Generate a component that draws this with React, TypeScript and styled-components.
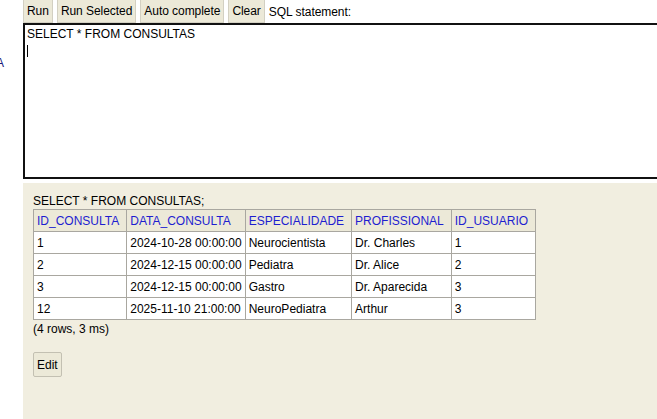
import React from "react";
import styled, { createGlobalStyle } from "styled-components";

const Global = createGlobalStyle`
  html, body { margin: 0; padding: 0; background: #ffffff; overflow: hidden; }
  body { font-family: "Liberation Sans", Arial, sans-serif; font-size: 12px; color: #000; }
`;

const Page = styled.div`
  display: flex;
  width: 657px;
  height: 419px;
  overflow: hidden;
`;

const LeftStrip = styled.div`
  width: 23px;
  flex: none;
  overflow: hidden;
  padding-top: 56px;
  box-sizing: border-box;
  font-size: 12px;
  color: #1a1a7a;
`;

const Clipped = styled.span`
  display: block;
  margin-left: -4px;
`;

const Main = styled.div`
  flex: 1;
  display: flex;
  flex-direction: column;
  min-width: 0;
`;

const Toolbar = styled.div`
  display: flex;
  align-items: center;
  gap: 4px;
  height: 23px;
  letter-spacing: -0.05px;
`;

const Btn = styled.div`
  display: flex;
  align-items: center;
  height: 23px;
  padding: 0 3px;
  box-sizing: border-box;
  background: #ece9d8;
  border: 1px solid #d3d0c2;
  border-top: none;
  font-size: 12px;
`;

const Label = styled.span`
  font-size: 12px;
`;

const Editor = styled.div`
  width: 660px;
  height: 156px;
  box-sizing: border-box;
  border: 2px solid #111;
  padding: 3px 2px;
  font-size: 12px;
  line-height: 13px;
  background: #fff;
`;

const Caret = styled.div`
  width: 1px;
  height: 12px;
  background: #000;
  margin-top: 4px;
`;

const Result = styled.div`
  flex: 1;
  margin-top: 4px;
  background: #f1eee0;
  padding: 11px 10px 0 10px;
`;

const Query = styled.div`
  line-height: 14px;
  margin-bottom: 1px;
`;

const Table = styled.table`
  border-collapse: collapse;
  font-size: 12px;
`;

const Th = styled.th`
  background: #ece9d8;
  color: #1e1ed0;
  font-weight: normal;
  text-align: left;
  border: 1px solid #a9a7a0;
  padding: 0 7px 0 3px;
  height: 21px;
`;

const Td = styled.td`
  background: #fff;
  border: 1px solid #a9a7a0;
  padding: 0 3px;
  height: 21px;
`;

const Info = styled.div`
  margin-top: 2px;
  line-height: 14px;
`;

const EditBtn = styled.div`
  display: inline-flex;
  align-items: center;
  margin-top: 16px;
  height: 25px;
  padding: 0 3px;
  box-sizing: border-box;
  border: 1px solid #c3c0b2;
  border-radius: 2px;
  background: #ece9d8;
  font-size: 12px;
`;

const columns = ["ID_CONSULTA", "DATA_CONSULTA", "ESPECIALIDADE", "PROFISSIONAL", "ID_USUARIO"];
const rows = [
  ["1", "2024-10-28 00:00:00", "Neurocientista", "Dr. Charles", "1"],
  ["2", "2024-12-15 00:00:00", "Pediatra", "Dr. Alice", "2"],
  ["3", "2024-12-15 00:00:00", "Gastro", "Dr. Aparecida", "3"],
  ["12", "2025-11-10 21:00:00", "NeuroPediatra", "Arthur", "3"],
];

export default function App() {
  return (
    <>
      <Global />
      <Page>
        <LeftStrip>
          <Clipped>A</Clipped>
        </LeftStrip>
        <Main>
          <Toolbar>
            <Btn>Run</Btn>
            <Btn>Run Selected</Btn>
            <Btn>Auto complete</Btn>
            <Btn>Clear</Btn>
            <Label>SQL statement:</Label>
          </Toolbar>
          <Editor>
            <div>SELECT * FROM CONSULTAS</div>
            <Caret />
          </Editor>
          <Result>
            <Query>SELECT * FROM CONSULTAS;</Query>
            <Table>
              <thead>
                <tr>
                  {columns.map((c) => (
                    <Th key={c}>{c}</Th>
                  ))}
                </tr>
              </thead>
              <tbody>
                {rows.map((r, i) => (
                  <tr key={i}>
                    {r.map((v, j) => (
                      <Td key={j}>{v}</Td>
                    ))}
                  </tr>
                ))}
              </tbody>
            </Table>
            <Info>(4 rows, 3 ms)</Info>
            <EditBtn>Edit</EditBtn>
          </Result>
        </Main>
      </Page>
    </>
  );
}
